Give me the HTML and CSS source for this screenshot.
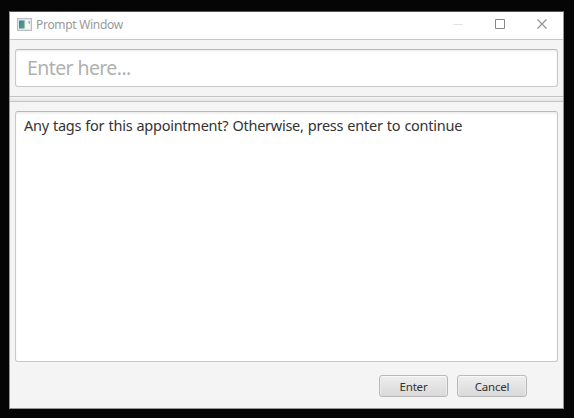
FILE: index.html
```html
<!DOCTYPE html>
<html lang="en">
<head>
<meta charset="utf-8">
<title>Prompt Window</title>
<link rel="stylesheet" href="styles.css">
</head>
<body>
<main class="window">
  <header class="titlebar">
    <svg class="app-icon" width="15" height="13" viewBox="0 0 15 13">
      <defs><linearGradient id="g" x1="0" y1="0" x2="1" y2="1"><stop offset="0" stop-color="#4878a8"/><stop offset="1" stop-color="#55a878"/></linearGradient></defs>
      <rect x=".5" y=".5" width="14" height="12" fill="#e2e5e9" stroke="#b9bcc2"/>
      <rect x="2" y="2.5" width="5.500" height="8" fill="url(#g)"/>
      <path d="M8.500 2h4.500v9H8.500z" fill="#f4f6f8"/>
      <path d="M11 3h2v3h-1z" fill="#8ebfc4"/>
    </svg>
    <h1 class="title">Prompt Window</h1>
    <div class="controls">
      <svg width="10" height="10" viewBox="0 0 10 10"><path d="M0 5.5h9.500" stroke="#e2e2e2"/></svg>
      <svg width="10" height="10" viewBox="0 0 10 10"><path d="M.5.500h9v9h-9z" fill="none" stroke="#888"/></svg>
      <svg width="10" height="10" viewBox="0 0 10 10"><path d="M.5.500l9 9M9.500.500l-9 9" stroke="#919191" stroke-width="1.100"/></svg>
    </div>
  </header>
  <section class="prompt"><div class="field">Enter here...</div></section>
  <div class="divider"></div>
  <section class="message"><div class="text">Any tags for this appointment? Otherwise, press enter to continue</div></section>
  <footer class="actions">
    <button class="button enter">Enter</button>
    <button class="button">Cancel</button>
  </footer>
</main>
</body>
</html>
```
FILE: styles.css
```css
* { box-sizing: border-box; }
body {
  margin: 0;
  height: 418px;
  padding: 11px 10px 9px 9px;
  overflow: hidden;
  background: #050505;
  font-family: "Noto Sans", sans-serif;
}
.window {
  display: flex;
  flex-direction: column;
  width: 555px;
  height: 398px;
  border: 1px solid #969696;
  border-top-color: #555;
  background: #f4f4f4;
}
.titlebar {
  display: flex;
  align-items: center;
  height: 28px;
  padding: 0 16px 3px 7px;
  border-bottom: 1px solid #c9c9c9;
  background: #fff;
}
.app-icon { margin-right: 4px; }
.title {
  margin: 0;
  padding-top: 1px;
  font-size: 12px;
  font-weight: 400;
  line-height: 20px;
  letter-spacing: -0.3px;
  color: #999;
}
.controls { display: flex; gap: 32px; margin-left: auto; }
.controls svg { display: block; }
.prompt { height: 56px; padding: 9px 5px 0; }
.field {
  height: 38px;
  padding: 0 11px;
  border: 1px solid #c8c8c8;
  border-top-color: #b8b8b8;
  border-radius: 3px;
  background: #fff;
  box-shadow: inset 0 1px 2px #ececec;
  font-size: 19.5px;
  line-height: 36px;
  letter-spacing: -0.6px;
  color: #b0b0b0;
}
.divider {
  height: 6px;
  border: solid #c4c4c4;
  border-width: 1px 0;
  background: linear-gradient(#f4f4f4, #e5e5e5);
}
.message { padding: 9px 5px 0; }
.text {
  height: 251px;
  padding: 2px 8px;
  border: 1px solid #c8c8c8;
  border-top-color: #b8b8b8;
  border-radius: 3px;
  background: #fff;
  box-shadow: inset 0 2px 2px #f0f0f0;
  font-size: 14.5px;
  line-height: 22px;
  letter-spacing: -0.26px;
  word-spacing: 0.65px;
  white-space: nowrap;
  color: #333;
}
.actions {
  display: flex;
  justify-content: flex-end;
  gap: 9px;
  padding: 13px 36px 0 0;
}
.button {
  width: 70px;
  height: 22px;
  padding: 0;
  border: 1px solid #b8b8b8;
  border-radius: 3px;
  background: linear-gradient(#eee, #d9d9d9);
  box-shadow: inset 0 1px #f8f8f8, inset 1px 0 #ebebeb, inset -1px 0 #ebebeb;
  font: 11.5px/19px "Noto Sans", sans-serif;
  letter-spacing: -0.2px;
  color: #333;
}
.enter { width: 69px; }
```
